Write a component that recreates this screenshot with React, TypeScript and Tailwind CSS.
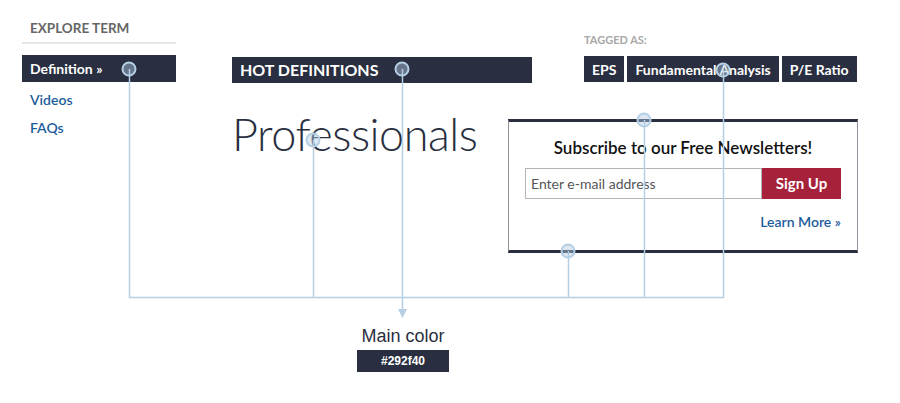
import React from "react";

const sans = "font-['Lato','Open_Sans',sans-serif]";

function Annotations() {
  const line = "#b5cfe4";
  const dots = [
    { x: 129, y: 69 },
    { x: 402, y: 69 },
    { x: 313, y: 140 },
    { x: 644, y: 120 },
    { x: 723, y: 70 },
    { x: 568, y: 251 },
  ];
  return (
    <svg
      className="pointer-events-none absolute left-0 top-0"
      width={900}
      height={403}
      viewBox="0 0 900 403"
    >
      <g stroke={line} strokeWidth={1.5} fill="none">
        <path d="M129.5 69V297.5H723.5V70" />
        <path d="M313.5 140V297" />
        <path d="M644.5 120V297" />
        <path d="M568.5 251V297" />
        <path d="M402.5 69V310" />
      </g>
      <path d="M398 309L407 309L402.5 318Z" fill={line} />
      {dots.map((d, i) => (
        <circle
          key={i}
          cx={d.x}
          cy={d.y}
          r={6.5}
          fill="rgba(180,205,228,0.45)"
          stroke={line}
          strokeWidth={2}
        />
      ))}
    </svg>
  );
}

export default function App() {
  return (
    <div className={`relative h-[403px] w-[900px] overflow-hidden bg-white ${sans}`}>
      <div className="flex pt-[18px]">
        {/* side menu */}
        <div className="ml-[22px] w-[154px] shrink-0">
          <div className="border-b-2 border-gray-200 pb-[4px] pl-[8px] text-[13.5px] font-bold text-[#666]">
            EXPLORE TERM
          </div>
          <div className="mt-[11px] flex h-[27px] items-center bg-[#292f40] pl-[8px] text-[14px] font-bold text-white">
            Definition »
          </div>
          <div className="mt-[7px] pl-[8px] text-[14px] font-semibold text-[#1d5c9b]">Videos</div>
          <div className="mt-[7px] pl-[8px] text-[14px] font-semibold text-[#1d5c9b]">FAQs</div>
        </div>

        {/* main */}
        <div className="ml-[56px] w-[626px] shrink-0">
          <div className="flex items-start">
            <div className="mt-[39px] flex h-[26px] w-[300px] shrink-0 items-center bg-[#292f40] pl-[8px] text-[16px] font-bold text-white">
              HOT DEFINITIONS
            </div>
            <div className="ml-[52px] mt-[14px] shrink-0">
              <div className="pb-[8px] text-[11px] leading-[16px] font-bold text-[#a8a8a8]">TAGGED AS:</div>
              <div className="flex gap-[3px] whitespace-nowrap">
                {["EPS", "Fundamental Analysis", "P/E Ratio"].map((t) => (
                  <span
                    key={t}
                    className="flex h-[26px] items-center bg-[#292f40] px-[8px] text-[14px] font-bold text-white"
                  >
                    {t}
                  </span>
                ))}
              </div>
            </div>
          </div>

          <div className="flex">
            <div className="mt-[29px] w-[276px] shrink-0 text-[45px] font-light leading-none tracking-[-0.5px] text-[#292f40]">
              Professionals
            </div>
            <div className="mt-[36px] h-[134px] w-[350px] shrink-0 border-x border-y-[3px] border-x-[#8f929b] border-y-[#292f40] px-[16px] pt-[13px]">
              <div className="text-center text-[17px] font-semibold text-[#111]">
                Subscribe to our Free Newsletters!
              </div>
              <div className="mt-[7px] flex h-[31px]">
                <div className="flex flex-1 items-center border border-[#b5b5b5] pl-[5px] text-[14px] text-[#555]">
                  Enter e-mail address
                </div>
                <div className="flex w-[79px] items-center justify-center bg-[#a6213a] text-[15px] font-bold text-white">
                  Sign Up
                </div>
              </div>
              <div className="mt-[12px] text-right text-[14px] font-semibold text-[#1d5c9b]">
                Learn More »
              </div>
            </div>
          </div>
        </div>
      </div>

      {/* legend */}
      <div className="absolute left-[357px] top-[324px] flex w-[92px] flex-col items-center">
        <div className="font-['Liberation_Sans',Arial,sans-serif] text-[18px] leading-[24px] text-[#2a2f40]">Main color</div>
        <div className="mt-[2px] flex h-[22px] w-[92px] items-center justify-center bg-[#292f40] font-['Liberation_Sans',Arial,sans-serif] text-[12px] font-bold text-white">
          #292f40
        </div>
      </div>

      <Annotations />
    </div>
  );
}
